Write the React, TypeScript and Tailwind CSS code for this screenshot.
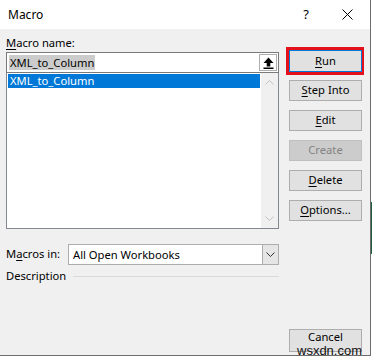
import React from 'react';

const U = ({ children }: { children: React.ReactNode }) => (
    <span className="underline decoration-1 underline-offset-[2px]">{children}</span>
);

const Btn = ({ children, disabled }: { children: React.ReactNode; disabled?: boolean }) => (
    <div
        className={`flex h-[21px] w-[73px] items-center justify-center border ${
            disabled ? 'border-[#bfbfbf] bg-[#cccccc] text-[#838383]' : 'border-[#adadad] bg-[#e1e1e1] text-black'
        }`}
    >
        {children}
    </div>
);

const Chevron = ({ up, color }: { up?: boolean; color: string }) => (
    <svg width="9" height="5" viewBox="0 0 9 5" className={up ? 'rotate-180' : ''}>
        <path d="M0.5 0.5 L4.5 4.5 L8.5 0.5" fill="none" stroke={color} strokeWidth="1" />
    </svg>
);

export default function App() {
    return (
        <div className="flex h-[361px] w-[372px] flex-col overflow-hidden bg-white font-['Noto_Sans',sans-serif] text-[11.2px] text-black">
            <div className="flex h-[356px]">
                {/* dialog */}
                <div className="flex w-[371px] flex-col border-r border-b border-[#6d6d6d] bg-[#f0f0f0]">
                    {/* title bar */}
                    <div className="flex h-[29px] items-center bg-white pl-[8px]">
                        <span className="text-[12px]">Macro</span>
                        <span className="ml-auto mr-[33px] text-[13px]">?</span>
                        <svg width="11" height="11" viewBox="0 0 11 11" className="mr-[17px]">
                            <path d="M0.5 0.5 L10.5 10.5 M10.5 0.5 L0.5 10.5" stroke="#000" strokeWidth="1" />
                        </svg>
                    </div>

                    <div className="flex flex-1 pl-[6px]">
                        {/* left column */}
                        <div className="flex w-[273px] flex-col">
                            <div className="mt-[6px] h-[16px] leading-[16px]">
                                <U>M</U>acro name:
                            </div>
                            <div className="mt-[1px] flex h-[21px] items-center border border-[#7a7a7a] bg-white pl-[2px] pr-[1px]">
                                <span className="bg-[#cccccc] px-[1px] leading-[15px]">XML_to_Column</span>
                                <div className="ml-auto flex h-[17px] w-[18px] items-center justify-center border border-[#adadad] bg-white">
                                    <svg width="11" height="12" viewBox="0 0 11 12">
                                        <path d="M5.5 0.5 L10.5 6 L7.3 6 L7.3 9.5 L3.7 9.5 L3.7 6 L0.5 6 Z" fill="#000" />
                                        <rect x="0.5" y="10.5" width="10" height="1.5" fill="#000" />
                                    </svg>
                                </div>
                            </div>
                            <div className="flex h-[156px] border border-t-0 border-[#828790] bg-white">
                                <div className="flex-1 px-[1px] pt-[1px]">
                                    <div className="h-[14px] bg-[#0078d7] pl-[2px] leading-[14px] text-white">XML_to_Column</div>
                                </div>
                                <div className="flex w-[17px] flex-col items-center justify-between bg-[#f0f0f0] py-[7px]">
                                    <Chevron up color="#c2c2c2" />
                                    <Chevron color="#c2c2c2" />
                                </div>
                            </div>

                            <div className="mt-[15px] flex h-[21px] items-center">
                                <span className="w-[62px]">
                                    M<U>a</U>cros in:
                                </span>
                                <div className="flex h-[21px] flex-1 border border-[#adadad] bg-white">
                                    <span className="flex-1 pl-[4px] leading-[19px]">All Open Workbooks</span>
                                    <div className="flex w-[16px] items-center justify-center border-l border-[#adadad] bg-[#e5e5e5]">
                                        <Chevron color="#333" />
                                    </div>
                                </div>
                            </div>

                            <div className="mt-[3px] flex h-[17px] items-center">
                                <span>Description</span>
                                <div className="ml-[7px] h-px flex-1 bg-[#d9d9d9]" />
                            </div>
                        </div>

                        {/* right column */}
                        <div className="ml-[10px] flex w-[73px] flex-col pt-[18px]">
                            <div className="-ml-[3px] w-[78px] border-[3px] border-[#e2111b] pr-[2px]">
                                <div className="flex h-[22px] w-[73px] items-center justify-center border border-[#0078d7] bg-[#e1e1e1]">
                                    <U>R</U>un
                                </div>
                            </div>
                            <div className="mt-[5px]">
                                <Btn>
                                    <U>S</U>tep Into
                                </Btn>
                            </div>
                            <div className="mt-[9px]">
                                <Btn>
                                    <U>E</U>dit
                                </Btn>
                            </div>
                            <div className="mt-[9px]">
                                <Btn disabled>Create</Btn>
                            </div>
                            <div className="mt-[9px]">
                                <Btn>
                                    <U>D</U>elete
                                </Btn>
                            </div>
                            <div className="mt-[9px]">
                                <Btn>
                                    <U>O</U>ptions...
                                </Btn>
                            </div>
                            <div className="relative mt-[108px] flex h-[23px] w-[73px] items-start justify-center border border-[#adadad] bg-[#e1e1e1] pt-[1px] leading-[12px]">
                                Cancel
                                <span className="absolute left-[7px] top-[15px] font-['Liberation_Sans',sans-serif] text-[13px] leading-[11px] text-[#111]">
                                    wsxdn.com
                                </span>
                            </div>
                        </div>
                    </div>
                </div>

                {/* outside strip */}
                <div className="flex w-px flex-col">
                    <div className="h-[202px] bg-white" />
                    <div className="h-[52px] bg-[#1e5c3a]" />
                    <div className="flex-1 bg-white" />
                </div>
            </div>
            <div className="flex-1 bg-white" />
        </div>
    );
}
